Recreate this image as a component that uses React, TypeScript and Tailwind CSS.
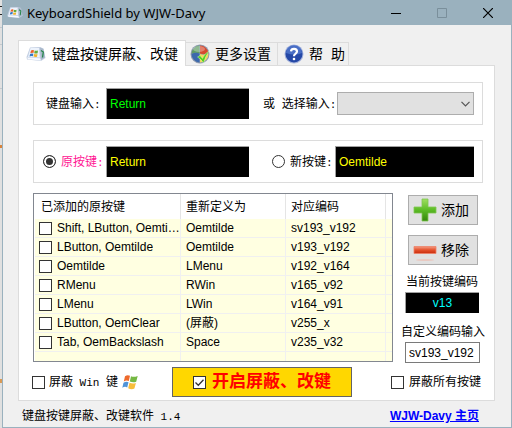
import React from "react";

const sans = "font-['Liberation_Sans','Noto_Sans_CJK_SC',sans-serif]";

const rows = [
  ["Shift, LButton, Oemtilde", "Oemtilde", "sv193_v192"],
  ["LButton, Oemtilde", "Oemtilde", "v193_v192"],
  ["Oemtilde", "LMenu", "v192_v164"],
  ["RMenu", "RWin", "v165_v92"],
  ["LMenu", "LWin", "v164_v91"],
  ["LButton, OemClear", "(屏蔽)", "v255_x"],
  ["Tab, OemBackslash", "Space", "v235_v32"],
];

// Latin text at about half the width of a Chinese character
function Half({ children }: { children: string }) {
  return <span className="font-['Liberation_Mono',monospace] text-[11px] leading-none whitespace-pre">{children}</span>;
}

function Flag({ className }: { className: string }) {
  return (
    <svg viewBox="0 0 16 16" className={className} aria-hidden="true">
      <path d="M3 2.2Q5.500 .4 8 1.700L6.800 7.100Q4.400 5.900 1.800 7.500Z" fill="#ee6a2c" />
      <path d="M9 2.200Q11.500 3.600 15.700 2L14.200 7.800Q11.200 9 7.800 7.600Z" fill="#75b843" />
      <path d="M1.500 8.700Q4.300 7 6.500 8.300L5.200 13.400Q2.900 12.100 .3 13.700Z" fill="#4f93d8" />
      <path d="M7.500 8.800Q10.700 10.300 13.900 9L12.400 14.600Q9.500 16 6.200 14.300Z" fill="#f7bd3b" />
    </svg>
  );
}

function AppIcon({ className }: { className: string }) {
  return (
    <svg viewBox="0 0 20 16" className={className} aria-hidden="true">
      <path d="M4 1.500 14 1l3.500 1.500L19.500 12l-4.500 3L1 13.500.5 11Z" fill="#c3cfe2" />
      <path d="M4.500 2 13 2l.8 9.500L2 11Z" fill="#edf3fc" />
      <path d="M14 1.500 17.300 3 19 11.500 15 14Z" fill="#a9b8ca" />
      <path d="M1 11.500 14 12.300 15 14.500 2 13.300Z" fill="#f7f9ff" />
      <path d="M5 4.500Q6.500 3.500 8 4.300L7.500 7Q6 6.300 4.300 7.200Z" fill="#ec6129" />
      <path d="M8.700 4.500Q10.300 5.200 12 4.500L11.600 7.300Q9.800 7.900 8.200 7.200Z" fill="#65ac3c" />
      <path d="M4.100 7.900Q5.900 7 7.300 7.800L6.800 10.300Q5.200 9.700 3.500 10.500Z" fill="#3478c5" />
      <path d="M8 8Q9.700 8.700 11.500 8L11 10.700Q9.300 11.300 7.500 10.500Z" fill="#f0b32c" />
      <path d="M15 4.500 17.300 6 16.500 11.500" stroke="#26874b" strokeWidth="1.300" fill="none" />
    </svg>
  );
}

function ShieldIcon() {
  return (
    <svg viewBox="0 0 20 20" className="size-5 shrink-0" aria-hidden="true">
      <circle cx="10" cy="10" r="9.500" fill="#8f9bb0" />
      <path d="M9.500 1.500A8.500 8.500 0 0 0 1.500 10Q5 8 9.500 9.500Z" fill="#5f9c63" />
      <path d="M10 1.500A8.500 8.500 0 0 1 18.500 9Q14 11 10 9.500Z" fill="#d64a2e" />
      <path d="M1.500 10Q5.500 8 9.500 9.500v9A8.500 8.500 0 0 1 1.500 10Z" fill="#3c69ac" />
      <path d="M10 10Q14 11.500 18.500 9.500A8.500 8.500 0 0 1 10 18.500Z" fill="#f5d75b" />
      <ellipse cx="9" cy="5" rx="6" ry="3" fill="#fff" opacity=".3" />
      <path d="m7.500 13 2.500-1.500 2.500 3Q14.500 9.500 19 7q-3.500 5-5.500 12Q11 15 7.500 13Z" fill="#55d01c" stroke="#e9ffd9" strokeWidth=".4" />
    </svg>
  );
}

function HelpIcon() {
  return (
    <svg viewBox="0 0 20 20" className="size-5 shrink-0" aria-hidden="true">
      <circle cx="10" cy="10" r="9.500" fill="#a6b4dc" />
      <circle cx="10" cy="10" r="8.500" fill="#2548a6" />
      <path d="M2 9a8 8 0 0 1 16 0Q11 12 2 9Z" fill="#5c82d5" opacity=".65" />
      <path d="M7 7.300C7.300 4 13 4 13 7.500c0 2.200-3 2.300-3 4.700" fill="none" stroke="#fff" strokeWidth="2.200" />
      <circle cx="10" cy="15" r="1.300" fill="#fff" />
    </svg>
  );
}

function PlusIcon() {
  return (
    <svg viewBox="0 0 24 24" className="size-6 shrink-0" aria-hidden="true">
      <defs>
        <linearGradient id="plus" x1="0" y1="0" x2="0" y2="1">
          <stop offset="0" stopColor="#a0df60" />
          <stop offset=".5" stopColor="#5bbb25" />
          <stop offset="1" stopColor="#35850b" />
        </linearGradient>
      </defs>
      <path d="M9 1h6v8h8v6h-8v8H9v-8H1V9h8Z" fill="url(#plus)" stroke="#7fc650" strokeWidth=".8" />
    </svg>
  );
}

function MinusIcon() {
  return (
    <svg viewBox="0 0 24 24" className="size-6 shrink-0" aria-hidden="true">
      <defs>
        <linearGradient id="minus" x1="0" y1="0" x2="0" y2="1">
          <stop offset="0" stopColor="#f49b82" />
          <stop offset=".5" stopColor="#e4512c" />
          <stop offset="1" stopColor="#c92c0c" />
        </linearGradient>
      </defs>
      <path d="M1 8.500h22v7H1Z" fill="url(#minus)" stroke="#ee8168" strokeWidth=".8" />
      <ellipse cx="12" cy="22" rx="9" ry="1" fill="#eeb9ac" opacity=".6" />
    </svg>
  );
}

const box = "size-[13px] shrink-0 appearance-none border border-[#333] bg-white";
const radio =
  "size-[13px] shrink-0 appearance-none rounded-full border border-[#333] bg-white checked:bg-[#333] checked:shadow-[inset_0_0_0_2px_#fff]";
const dark = "min-w-0 border-0 border-t border-l border-[#a0a0a0] bg-black text-[12px] outline-none";
const group = "flex h-[43px] items-center border border-[#dcdcdc]";
const push = "mx-[3px] flex h-[30px] w-[70px] items-center gap-1 border border-[#adadad] bg-[#e1e1e1] pl-1 text-[14px] whitespace-nowrap";

export default function App() {
  return (
    <div className={`flex min-h-screen bg-[#e0e0e0] text-[12px] leading-4 text-black ${sans}`}>
      <div className="w-[2px] shrink-0 pt-[6px]" aria-hidden="true">
        <div className="h-[9px] border-y border-[#222]" />
        <div className="mt-3 h-[18px] border-y border-[#c4c8cc]" />
        <div className="mt-[43px] h-px bg-[#c4c8cc]" />
        <div className="mt-14 h-[3px] bg-[#d8843c]" />
        <div className="mt-[231px] h-[4px] bg-[#d99a55]" />
      </div>
      <main className="flex min-w-0 flex-1 flex-col border-x border-b border-[#9ab1be] bg-[#f0f0f0]">
        <header className="flex h-[25px] items-center bg-[#9ab1be] pl-1">
          <AppIcon className="h-[13px] w-4" />
          <h1 className="ml-1 min-w-0 flex-1 truncate font-['Noto_Sans',sans-serif] text-[13px]">KeyboardShield by WJW-Davy</h1>
          <button aria-label="最小化" className="flex h-full w-[46px] items-center justify-center">
            <svg viewBox="0 0 10 10" className="size-[10px]"><path d="M0 5.500h10" stroke="#000" /></svg>
          </button>
          <button aria-label="最大化" disabled className="flex h-full w-[46px] items-center justify-center">
            <svg viewBox="0 0 10 10" className="size-[10px]"><path d="M.5.5h9v9h-9Z" fill="none" stroke="#7a8f9b" /></svg>
          </button>
          <button aria-label="关闭" className="flex h-full w-[46px] items-center justify-center">
            <svg viewBox="0 0 10 10" className="size-[10px]"><path d="m0 0 10 10M10 0 0 10" stroke="#000" strokeWidth="1.200" /></svg>
          </button>
        </header>

        <div className="pt-[15px] pr-4 pl-[15px]">
          <div role="tablist" className="flex items-end text-[14px]">
            <button role="tab" aria-selected="true" className="z-10 -mb-px flex h-[26px] w-[168px] items-center gap-[6px] border border-b-0 border-[#dcdcdc] bg-white pl-[7px] whitespace-nowrap">
              <AppIcon className="h-4 w-5 shrink-0" />
              键盘按键屏蔽、改键
            </button>
            <button role="tab" aria-selected="false" className="flex h-[23px] w-[92px] items-center gap-[5px] border-t border-r border-[#dcdcdc] pl-1 whitespace-nowrap">
              <ShieldIcon />
              更多设置
            </button>
            <button role="tab" aria-selected="false" className="flex h-[23px] w-[71px] items-center gap-[5px] border-t border-r border-[#dcdcdc] pl-[6px] whitespace-nowrap">
              <HelpIcon />
              <span className="flex gap-2"><span>帮</span> <span>助</span></span>
            </button>
          </div>

          <section className="border border-[#dcdcdc] bg-white pt-4 pr-[11px] pb-[3px] pl-[14px]">
            <div className={`${group} pr-2 pl-3`}>
              <label htmlFor="key" className="w-[60px] whitespace-nowrap">键盘输入<Half>:</Half></label>
              <input id="key" readOnly value="Return" className={`${dark} h-[31px] flex-1 pl-[3px] text-[#00ff00]`} />
              <label htmlFor="pick" className="ml-[14px] w-[74px] whitespace-nowrap">或<Half> </Half>选择输入<Half>:</Half></label>
              <div className="grid w-[137px] items-center">
                <select id="pick" className="col-start-1 row-start-1 h-[23px] appearance-none border border-[#adadad] bg-[#e1e1e1]">
                  <option></option>
                </select>
                <svg viewBox="0 0 9 6" className="pointer-events-none col-start-1 row-start-1 mr-1 h-[6px] w-[9px] justify-self-end">
                  <path d="m.5.8 4 4 4-4" fill="none" stroke="#555" strokeWidth="1.200" />
                </svg>
              </div>
            </div>

            <div className={`${group} mt-[15px] pr-2 pl-[9px]`}>
              <label className="flex w-[63px] items-center gap-[5px] whitespace-nowrap text-[#ff1493]">
                <input type="radio" name="target" defaultChecked className={radio} />
                <span>原按键<Half>:</Half></span>
              </label>
              <input aria-label="原按键" readOnly value="Return" className={`${dark} h-[31px] flex-1 pl-[3px] text-[#ffff00]`} />
              <label className="ml-[23px] flex w-[63px] items-center gap-[5px] whitespace-nowrap">
                <input type="radio" name="target" className={radio} />
                <span>新按键<Half>:</Half></span>
              </label>
              <input aria-label="新按键" readOnly value="Oemtilde" className={`${dark} h-[31px] w-[139px] pl-[3px] text-[#ffff00]`} />
            </div>

            <div className="mt-[10px] flex items-start gap-3">
              <div className="min-w-0 flex-1 border border-[#828790] bg-white pl-px">
                <table className="w-full table-fixed border-separate border-spacing-0 text-left">
                  <colgroup>
                    <col />
                    <col className="w-[105px]" />
                    <col className="w-[100px]" />
                    <col className="w-[6px]" />
                  </colgroup>
                  <thead>
                    <tr className="h-[25px]">
                      <th className="border-r border-[#e5e5e5] p-0 pl-[6px] font-normal">已添加的原按键</th>
                      <th className="border-r border-[#e5e5e5] p-0 pl-[5px] font-normal">重新定义为</th>
                      <th className="border-r border-[#e5e5e5] p-0 pl-[5px] font-normal">对应编码</th>
                      <th className="p-0"></th>
                    </tr>
                  </thead>
                  <tbody className="bg-[#ffffe1]">
                    {rows.map(([from, to, code]) => (
                      <tr key={code} className="h-[19px]">
                        <td className="border-r border-b border-[#f0f0f0] p-0 pl-1">
                          <label className="flex items-center gap-[5px]">
                            <input type="checkbox" className={box} />
                            <span className="truncate">{from}</span>
                          </label>
                        </td>
                        <td className="border-r border-b border-[#f0f0f0] p-0 pl-[5px]">{to}</td>
                        <td className="border-r border-b border-[#f0f0f0] p-0 pl-[5px]">{code}</td>
                        <td className="border-b border-[#f0f0f0] p-0"></td>
                      </tr>
                    ))}
                    <tr className="h-[9px]">
                      <td className="border-r border-[#f0f0f0] p-0"></td>
                      <td className="border-r border-[#f0f0f0] p-0"></td>
                      <td className="border-r border-[#f0f0f0] p-0"></td>
                      <td className="p-0"></td>
                    </tr>
                  </tbody>
                </table>
              </div>

              <div className="flex w-[78px] flex-col pt-[2px]">
                <button className={push}><PlusIcon />添加</button>
                <button className={`${push} mt-[10px]`}><MinusIcon />移除</button>
                <label htmlFor="current" className="mt-[9px] ml-px whitespace-nowrap">当前按键编码</label>
                <input id="current" readOnly value="v13" className={`${dark} mt-[2px] h-[21px] w-[74px] text-center text-[#00ffff]`} />
                <label htmlFor="custom" className="-ml-1 mt-[11px] whitespace-nowrap">自定义编码输入</label>
                <input id="custom" defaultValue="sv193_v192" className="mt-[2px] h-[21px] w-[75px] border border-[#7a7a7a] bg-white px-[3px] text-[12px]" />
              </div>
            </div>

            <div className="mt-1 -ml-px flex items-center">
              <label className="flex w-[140px] items-center gap-[4px] whitespace-nowrap">
                <input type="checkbox" className={box} />
                <span>屏蔽<Half> Win </Half>键</span>
                <Flag className="size-4" />
              </label>
              <label className="flex h-[30px] w-[180px] items-center gap-[6px] border border-[#646464] bg-[#ffd700] pl-5 text-[17px] font-bold whitespace-nowrap text-[#ff0000]">
                <span className="grid">
                  <input type="checkbox" defaultChecked className={`${box} col-start-1 row-start-1`} />
                  <svg viewBox="0 0 13 13" className="pointer-events-none col-start-1 row-start-1 size-[13px]">
                    <path d="m2.500 6.500 2.800 2.800 5.200-5.500" fill="none" stroke="#333" strokeWidth="1.300" />
                  </svg>
                </span>
                开启屏蔽、改键
              </label>
              <label className="ml-auto flex w-[92px] items-center gap-[5px] whitespace-nowrap">
                <input type="checkbox" className={box} />
                屏蔽所有按键
              </label>
            </div>
          </section>
        </div>

        <footer className="flex flex-1 items-center justify-between pt-1 pr-8 pl-[19px]">
          <span>键盘按键屏蔽、改键软件<Half> 1.4</Half></span>
          <a href="#home" className="font-bold text-[#0000ff] underline">WJW-Davy 主页</a>
        </footer>
      </main>
    </div>
  );
}
